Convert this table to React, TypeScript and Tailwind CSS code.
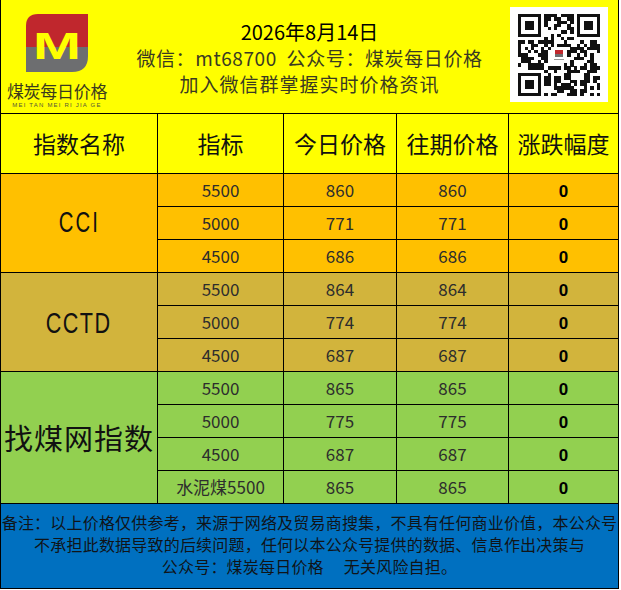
import React from 'react'

const CJK = "font-['Noto_Sans_CJK_SC',sans-serif]"

const GROUPS = [
  {
    name: 'CCI',
    bg: 'bg-[#ffc000]',
    span: 'row-span-3',
    nameCls: "font-['Liberation_Sans',sans-serif] text-[29px] tracking-[3px] scale-x-[0.7]",
    rows: [
      ['5500', '860', '860', '0'],
      ['5000', '771', '771', '0'],
      ['4500', '686', '686', '0'],
    ],
  },
  {
    name: 'CCTD',
    bg: 'bg-[#d2b43c]',
    span: 'row-span-3',
    nameCls: "font-['Liberation_Sans',sans-serif] text-[30px] tracking-[2px] scale-x-[0.72]",
    rows: [
      ['5500', '864', '864', '0'],
      ['5000', '774', '774', '0'],
      ['4500', '687', '687', '0'],
    ],
  },
  {
    name: '找煤网指数',
    bg: 'bg-[#92d050]',
    span: 'row-span-4',
    nameCls: `${CJK} text-[29px] tracking-[1px]`,
    rows: [
      ['5500', '865', '865', '0'],
      ['5000', '775', '775', '0'],
      ['4500', '687', '687', '0'],
      ['水泥煤5500', '865', '865', '0'],
    ],
  },
]

function Logo() {
  return (
    <svg width="64" height="58" viewBox="0 0 64 58">
      <path d="M12 0 H62 V33 H0 V12 Q0 0 12 0 Z" fill="#c0272d" />
      <path d="M0 33 H62 V42 Q62 58 46 58 H0 Z" fill="#6d6e70" />
      <text
        x="31"
        y="45"
        textAnchor="middle"
        fontFamily="Liberation Sans, sans-serif"
        fontWeight="bold"
        fontSize="36"
        textLength="48"
        lengthAdjust="spacingAndGlyphs"
        fill="#ffff00"
      >
        M
      </text>
    </svg>
  )
}

function QrCode() {
  const n = 25
  const cells: React.ReactNode[] = []
  let seed = 11
  const rnd = () => {
    seed = (seed * 16807) % 2147483647
    return seed / 2147483647
  }
  const inFinder = (x: number, y: number) =>
    (x < 8 && y < 8) || (x >= n - 8 && y < 8) || (x < 8 && y >= n - 8)
  for (let y = 0; y < n; y++) {
    for (let x = 0; x < n; x++) {
      if (inFinder(x, y)) continue
      if (x >= 10 && x <= 14 && y >= 10 && y <= 14) continue
      if (rnd() < 0.52) cells.push(<rect key={`${x}-${y}`} x={x} y={y} width="1.02" height="1.02" fill="#111" />)
    }
  }
  const finder = (fx: number, fy: number) => (
    <g key={`f${fx}${fy}`}>
      <rect x={fx} y={fy} width="7" height="7" fill="#111" />
      <rect x={fx + 1} y={fy + 1} width="5" height="5" fill="#fff" />
      <rect x={fx + 2} y={fy + 2} width="3" height="3" fill="#111" />
    </g>
  )
  return (
    <svg width="82" height="82" viewBox="0 0 25 25" shapeRendering="crispEdges">
      {cells}
      {finder(0, 0)}
      {finder(n - 7, 0)}
      {finder(0, n - 7)}
      <rect x="10.3" y="10.3" width="4.4" height="4.4" fill="#fff" />
      <rect x="11.2" y="11" width="2.6" height="1.3" fill="#c0272d" />
      <rect x="11.2" y="12.3" width="2.6" height="0.9" fill="#6d6e70" />
      <rect x="11" y="13.6" width="3" height="0.3" fill="#999" />
    </svg>
  )
}

export default function App() {
  return (
    <div className="w-[619px] h-[589px] border-l border-r border-b border-black flex flex-col bg-white">
      {/* header */}
      <div className="h-[114px] bg-[#ffff00] border-b border-black flex">
        <div className="w-[124px] pr-[12px] flex flex-col items-center pt-[14px]">
          <div className="pl-[2px]">
            <Logo />
          </div>
          <div className={`${CJK} text-[17px] leading-[19px] mt-[9px] tracking-[-0.3px] text-[#3b3b1e]`}>煤炭每日价格</div>
          <div className="font-['Liberation_Sans',sans-serif] text-[6px] leading-[8px] tracking-[1.2px] text-[#55553a] mt-[1px]">
            MEI TAN MEI RI JIA GE
          </div>
        </div>
        <div className={`flex-1 flex flex-col items-center pt-[19px] ${CJK}`}>
          <div className="text-[20px] leading-[26px] text-black">2026年8月14日</div>
          <div className="text-[19px] leading-[26px] tracking-[0.6px] text-[#3a3a22] whitespace-pre">微信：mt68700  公众号：煤炭每日价格</div>
          <div className="text-[19px] leading-[26px] tracking-[1px] text-[#3a3a22]">加入微信群掌握实时价格资讯</div>
        </div>
        <div className="w-[124px] pt-[7px] pl-[16px]">
          <div className="w-[98px] h-[95px] bg-white flex items-center justify-center">
            <QrCode />
          </div>
        </div>
      </div>

      {/* table header */}
      <div className={`h-[60px] bg-[#ffff00] border-b border-black grid grid-cols-[157px_126px_113px_112px_1fr] ${CJK} text-[23px] text-[#111]`}>
        <div className="border-r border-black flex items-center justify-center">指数名称</div>
        <div className="border-r border-black flex items-center justify-center">指标</div>
        <div className="border-r border-black flex items-center justify-center">今日价格</div>
        <div className="border-r border-black flex items-center justify-center">往期价格</div>
        <div className="flex items-center justify-center">涨跌幅度</div>
      </div>

      {/* groups */}
      {GROUPS.map(g => (
        <div key={g.name} className={`grid grid-cols-[157px_126px_113px_112px_1fr] auto-rows-[33px] ${g.bg}`}>
          <div className={`${g.span} border-r border-b border-black flex items-center justify-center text-[#111]`}>
            <span className={`inline-block ${g.nameCls}`}>{g.name}</span>
          </div>
          {g.rows.map((r, i) => (
            <React.Fragment key={i}>
              <div className={`border-r border-b border-black flex items-center justify-center ${CJK} text-[17px] text-[#2d2d2d]`}>{r[0]}</div>
              <div className={`border-r border-b border-black flex items-center justify-center ${CJK} text-[17px] text-[#2d2d2d]`}>{r[1]}</div>
              <div className={`border-r border-b border-black flex items-center justify-center ${CJK} text-[17px] text-[#2d2d2d]`}>{r[2]}</div>
              <div className="border-b border-black flex items-center justify-center pt-[3px] font-['Liberation_Sans',sans-serif] font-bold text-[17px] text-black">{r[3]}</div>
            </React.Fragment>
          ))}
        </div>
      ))}

      {/* footer note */}
      <div className={`flex-1 bg-[#0070c0] ${CJK} text-[16px] leading-[22px] tracking-[0.2px] text-[#101418] text-center pt-[7px] whitespace-pre`}>
        {'备注：以上价格仅供参考，来源于网络及贸易商搜集，不具有任何商业价值，本公众号\n不承担此数据导致的后续问题，任何以本公众号提供的数据、信息作出决策与\n公众号：煤炭每日价格　 无关风险自担。'}
      </div>
    </div>
  )
}
